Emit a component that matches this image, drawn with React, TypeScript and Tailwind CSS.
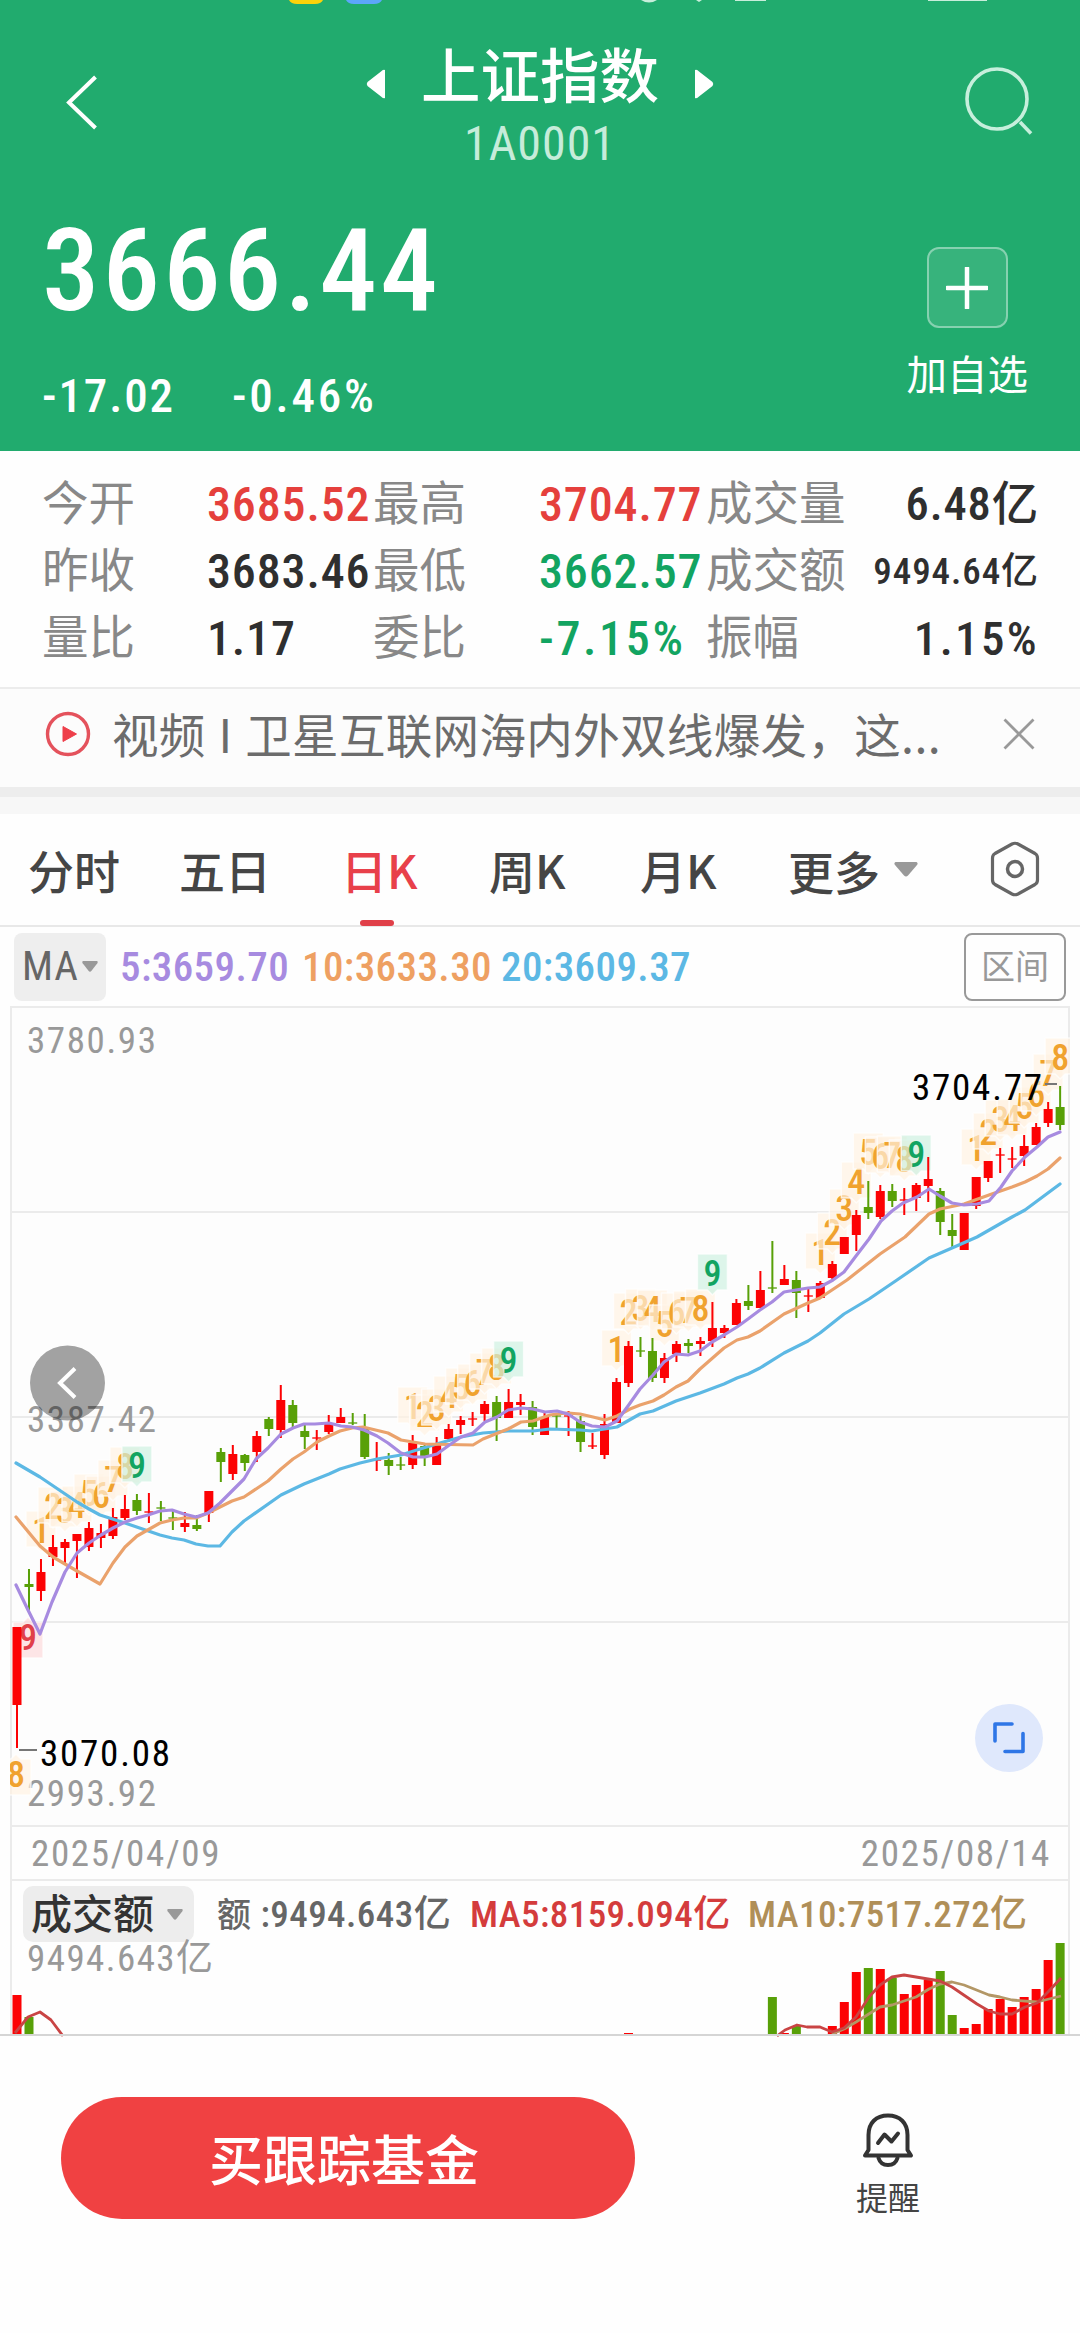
import { Fragment } from 'react';

// [body top, body bottom, high, low, up]
type Candle = [number, number, number, number, boolean];

const UP = '#fc0204';
const DOWN = '#58a008';

const candles: Candle[] = [
  [1627, 1705, 1627, 1748, true],
  [1584, 1587, 1569, 1610, false],
  [1572, 1591, 1559, 1601, true],
  [1547, 1557, 1535, 1566, true],
  [1542, 1548, 1539, 1563, true],
  [1534, 1541, 1534, 1578, true],
  [1528, 1547, 1522, 1551, true],
  [1533, 1538, 1524, 1548, true],
  [1517, 1536, 1508, 1539, true],
  [1509, 1518, 1495, 1520, true],
  [1500, 1511, 1494, 1515, false],
  [1511, 1513, 1493, 1523, true],
  [1507, 1509, 1501, 1521, false],
  [1517, 1519, 1510, 1530, false],
  [1523, 1527, 1512, 1532, true],
  [1525, 1529, 1515, 1531, false],
  [1491, 1513, 1491, 1522, true],
  [1452, 1462, 1448, 1482, false],
  [1454, 1474, 1445, 1480, true],
  [1455, 1463, 1454, 1471, false],
  [1436, 1452, 1431, 1462, true],
  [1419, 1429, 1417, 1436, false],
  [1400, 1430, 1385, 1438, true],
  [1405, 1423, 1400, 1427, false],
  [1431, 1437, 1425, 1449, false],
  [1437, 1439, 1430, 1450, true],
  [1423, 1432, 1415, 1434, true],
  [1417, 1423, 1408, 1423, true],
  [1422, 1424, 1413, 1425, false],
  [1428, 1457, 1414, 1459, false],
  [1459, 1461, 1442, 1471, true],
  [1460, 1466, 1453, 1475, false],
  [1464, 1466, 1457, 1470, false],
  [1443, 1465, 1435, 1469, true],
  [1446, 1456, 1443, 1466, false],
  [1445, 1465, 1437, 1465, true],
  [1429, 1439, 1424, 1442, true],
  [1420, 1425, 1416, 1434, true],
  [1418, 1420, 1412, 1426, true],
  [1404, 1414, 1401, 1421, true],
  [1402, 1418, 1396, 1441, false],
  [1402, 1418, 1389, 1418, true],
  [1402, 1405, 1394, 1415, true],
  [1407, 1427, 1401, 1435, false],
  [1417, 1435, 1413, 1435, true],
  [1415, 1417, 1413, 1428, false],
  [1415, 1417, 1411, 1436, true],
  [1421, 1442, 1416, 1452, false],
  [1445, 1447, 1433, 1449, true],
  [1424, 1455, 1414, 1459, true],
  [1382, 1423, 1378, 1423, true],
  [1346, 1383, 1341, 1387, true],
  [1350, 1352, 1337, 1357, false],
  [1351, 1378, 1338, 1382, false],
  [1358, 1378, 1353, 1383, true],
  [1344, 1354, 1341, 1362, true],
  [1343, 1346, 1339, 1353, false],
  [1341, 1344, 1337, 1356, true],
  [1328, 1341, 1302, 1347, true],
  [1328, 1333, 1325, 1338, true],
  [1303, 1325, 1299, 1325, true],
  [1301, 1306, 1285, 1310, false],
  [1290, 1308, 1271, 1308, true],
  [1287, 1289, 1241, 1293, false],
  [1279, 1285, 1265, 1285, true],
  [1280, 1293, 1271, 1318, false],
  [1295, 1297, 1287, 1312, true],
  [1283, 1298, 1281, 1298, true],
  [1264, 1278, 1261, 1280, true],
  [1237, 1254, 1237, 1254, true],
  [1215, 1235, 1210, 1251, true],
  [1207, 1213, 1181, 1219, false],
  [1191, 1217, 1185, 1219, true],
  [1191, 1201, 1184, 1207, false],
  [1199, 1201, 1188, 1215, true],
  [1185, 1198, 1183, 1211, true],
  [1179, 1186, 1157, 1202, true],
  [1191, 1222, 1188, 1235, false],
  [1230, 1236, 1214, 1248, false],
  [1213, 1250, 1213, 1250, true],
  [1177, 1206, 1177, 1209, true],
  [1161, 1178, 1161, 1182, true],
  [1154, 1156, 1148, 1173, true],
  [1158, 1160, 1147, 1168, true],
  [1146, 1156, 1135, 1166, true],
  [1127, 1145, 1123, 1145, true],
  [1109, 1123, 1102, 1127, true],
  [1107, 1125, 1086, 1130, false],
];

const ma5 =
  '16,1585 28,1610 40,1634 52,1602 65,1572 77,1553 89,1543 101,1535 113,1528 125,1522 137,1518 148,1515 160,1511 172,1510 184,1514 196,1517 208,1513 220,1503 232,1491 244,1479 256,1459 268,1448 281,1434 293,1428 304,1424 315,1424 329,1423 341,1426 352,1427 364,1430 377,1436 388,1443 401,1453 413,1457 425,1457 437,1454 448,1446 461,1437 473,1433 485,1422 497,1417 508,1410 521,1408 533,1409 545,1412 557,1411 568,1414 580,1422 592,1426 605,1427 617,1421 628,1406 640,1389 653,1375 664,1362 676,1354 688,1355 700,1351 712,1342 724,1335 737,1327 748,1319 760,1310 772,1302 784,1292 796,1290 808,1288 820,1287 833,1280 844,1272 856,1256 869,1239 881,1221 892,1211 903,1203 917,1197 929,1189 940,1196 952,1203 964,1205 977,1204 989,1201 1001,1187 1012,1171 1025,1157 1037,1147 1048,1137 1060,1132';
const ma10 =
  '16,1517 40,1546 53,1557 77,1571 100,1584 113,1563 125,1547 137,1536 160,1523 172,1520 184,1518 196,1518 208,1513 232,1501 244,1497 268,1481 281,1469 293,1459 304,1452 317,1442 329,1436 340,1431 352,1428 363,1427 388,1433 401,1440 425,1444 473,1445 483,1439 508,1429 521,1422 533,1421 550,1415 557,1414 568,1413 580,1414 593,1417 605,1420 617,1416 630,1409 640,1405 653,1401 664,1395 676,1387 688,1381 700,1369 724,1348 737,1340 748,1337 760,1331 784,1314 808,1303 820,1298 847,1280 880,1254 905,1237 929,1214 940,1209 964,1204 989,1195 1012,1187 1025,1182 1037,1176 1048,1169 1060,1158';
const ma20 =
  '16,1463 40,1477 77,1502 89,1509 100,1515 125,1523 160,1535 172,1538 184,1540 196,1544 208,1546 220,1546 232,1532 244,1521 281,1495 304,1484 329,1474 340,1469 360,1463 377,1459 401,1455 420,1449 440,1443 461,1437 483,1433 508,1431 533,1431 550,1429 580,1430 592,1431 617,1427 640,1414 653,1411 676,1401 700,1393 724,1384 737,1378 748,1374 760,1368 784,1353 808,1341 820,1333 844,1314 869,1299 897,1280 929,1258 952,1248 977,1237 1012,1217 1025,1210 1060,1184';

// first candle of each nine-turn run and how many counts it reaches
const runs = [
  { start: 2, count: 9 },
  { start: 33, count: 9 },
  { start: 50, count: 9 },
  { start: 67, count: 9 },
  { start: 80, count: 8 },
];

// [candle index, bar top, up]
const volumes: [number, number, boolean][] = [
  [0, 1995, true], [1, 2017, false], [51, 2033, true], [63, 1997, false], [64, 2033, true],
  [65, 2026, false], [68, 2026, true], [69, 2002, true], [70, 1972, true], [71, 1968, false],
  [72, 1969, true], [73, 1978, false], [74, 1994, true], [75, 1985, true], [76, 1980, true],
  [77, 1971, false], [78, 2015, false], [79, 2028, true], [80, 2024, true], [81, 2009, true],
  [82, 1999, true], [83, 2007, true], [84, 1997, true], [85, 1989, true], [86, 1960, true],
  [87, 1943, false],
];

const volMa5 = [
  '15,2033 28,2017 40,2012 51,2020 63,2036',
  '777,2036 785,2030 797,2025 807,2027 820,2027 832,2032 844,2028 856,2017 869,1997 880,1985 892,1977 904,1975 940,1981 952,1987 977,2004 989,2011 1000,2014 1012,2014 1025,2007 1037,2003 1048,1992 1061,1978',
];
const volMa10 =
  '832,2034 844,2029 856,2022 880,2007 892,2005 916,1997 929,1989 940,1984 952,1982 964,1985 989,1995 1000,1997 1012,2000 1037,2002 1061,1996';

const cx = (i: number) => 17 + i * 11.99;

const stats = [
  ['今开', '3685.52', 'text-[#e5403c]', '最高', '3704.77', 'text-[#e5403c]', '成交量', '6.48亿'],
  ['昨收', '3683.46', 'text-[#2f2f2f]', '最低', '3662.57', 'text-[#12a461]', '成交额', '9494.64亿'],
  ['量比', '1.17', 'text-[#2f2f2f]', '委比', '-7.15%', 'text-[#12a461]', '振幅', '1.15%'],
];

const tabs = ['分时', '五日', '日K', '周K', '月K'];

function Label({ x, y, w, fill = '#999', weight = 400, children }: {
  x: number; y: number; w: number; fill?: string; weight?: number; children: string;
}) {
  return (
    <text x={x} y={y} fontSize={37} fill={fill} fontWeight={weight} textLength={w} lengthAdjust="spacing">
      {children}
    </text>
  );
}

function Badge({ x, tip, n, below }: { x: number; tip: number; n: number; below?: boolean }) {
  const tone =
    n === 9 ? (below ? ['#fcd8da', '#e0404a'] : ['#cdf0e0', '#12a461']) : ['#fff1e2', '#f0a22e'];
  const s = below ? -1 : 1;
  const d = `M${x - 15} ${tip - 41 * s}H${x + 15}V${tip - 5 * s}H${x + 5}L${x} ${tip}L${x - 5} ${tip - 5 * s}H${x - 15}Z`;
  return (
    <g>
      <path d={d} fill={tone[0]} fillOpacity={0.68} stroke="#fff" strokeOpacity={0.7} strokeWidth={1.5} strokeLinejoin="round" />
      <text x={x} y={below ? tip + 33 : tip - 9} fontSize={36} fontWeight={500} fill={tone[1]} textAnchor="middle">{n}</text>
    </g>
  );
}

function KLineChart() {
  return (
    <svg className="block h-[821px] w-full" viewBox="0 1006 1080 821">
      <defs>
        <clipPath id="plot"><rect x="10" y="1006" width="1060" height="821" /></clipPath>
      </defs>
      <rect x="11" y="1007" width="1058" height="820" fill="#fdfdfd" />
      <g stroke="#ebebeb" strokeWidth="2">
        <path d="M10 1007H1070M10 1212H1070M10 1417H1070M10 1622H1070M10 1826H1070" />
        <path d="M11 1006V1827M1069 1006V1827" />
      </g>
      <Label x={27} y={1053} w={129}>3780.93</Label>
      <Label x={27} y={1432} w={129}>3387.42</Label>
      <Label x={27} y={1806} w={129}>2993.92</Label>
      <g clipPath="url(#plot)">
        <Badge x={16} tip={1754} n={8} below />
        <Badge x={28} tip={1617} n={9} below />
        {runs.map(r => (
          <Fragment key={r.start}>
            {Array.from({ length: r.count }, (_, k) => (
              <Badge key={k} x={cx(r.start + k)} tip={candles[r.start + k][2] - 7} n={k + 1} />
            ))}
          </Fragment>
        ))}
        {candles.map(([top, bottom, high, low, up], i) => (
          <g key={i} fill={up ? UP : DOWN}>
            <rect x={cx(i) - 1} y={high} width={2} height={low - high} />
            <rect x={cx(i) - 4.5} y={top} width={9} height={bottom - top} opacity={bottom - top < 3 ? 0.65 : 1} />
          </g>
        ))}
      </g>
      <g fill="none" strokeWidth="3.2" strokeLinejoin="round" strokeLinecap="round">
        <polyline points={ma20} stroke="#5cb8e4" />
        <polyline points={ma10} stroke="#eaa26c" />
        <polyline points={ma5} stroke="#a78be0" />
      </g>
      <path d="M19 1750H37M1045 1084H1057" stroke="#777" strokeWidth="2" />
      <Label x={40} y={1766} w={130} fill="#000">3070.08</Label>
      <Label x={912} y={1100} w={130} fill="#000">3704.77</Label>
      <circle cx="67.5" cy="1383" r="37.5" fill="#000" fillOpacity="0.36" />
      <path d="M75 1368.500L60 1383L75 1397.500" fill="none" stroke="#fff" strokeWidth="4" />
      <circle cx="1009" cy="1738" r="34" fill="#dfe8fc" />
      <path d="M1012 1724H995V1741M1023 1733.500V1751.500H1005" fill="none" stroke="#2f76e6" strokeWidth="3.6" strokeLinecap="round" strokeLinejoin="round" />
    </svg>
  );
}

function VolumeChart() {
  return (
    <svg className="block h-[93px] w-full overflow-visible" viewBox="0 1943 1080 93">
      <path d="M11 1943V2036M1069 1943V2036" stroke="#ebebeb" strokeWidth="2" />
      <Label x={27} y={1971} w={186}>9494.643亿</Label>
      {volumes.map(([i, top, up]) => (
        <rect key={i} x={cx(i) - 4.5} y={top} width={9} height={2036 - top} fill={up ? UP : DOWN} />
      ))}
      <g fill="none" strokeWidth="2.8" strokeLinejoin="round">
        <polyline points={volMa10} stroke="#b39766" />
        {volMa5.map(p => <polyline key={p} points={p} stroke="#c94444" />)}
      </g>
      <path d="M0 2035H1080" stroke="#d5d5d5" strokeWidth="2" />
    </svg>
  );
}

function Caret({ className }: { className: string }) {
  return (
    <svg className={className} viewBox="0 0 24 15" preserveAspectRatio="none">
      <path d="M1.500 0H22.500Q24.500 1 23 3L14 13.500Q12 15.500 10 13.500L1 3Q-.5 1 1.500 0Z" fill="#999" />
    </svg>
  );
}

function Header() {
  return (
    <header className="relative h-[451px] bg-[#21ab6e] text-white">
      {/* bottom slice of the status bar */}
      <svg className="absolute left-0 top-0 h-1 w-full" viewBox="0 0 1080 4">
        <path d="M289 0H323Q321 4 315 4H297Q291 4 289 0Z" fill="#fcd20a" />
        <path d="M346 0H382Q380 4 374 4H354Q348 4 346 0Z" fill="#5ca6fa" />
        <path d="M641 0Q649 5 657 0ZM696 0L699 2L702 0ZM735 0H766V1H735ZM928 0H987V1H928Z" fill="#c8eedb" />
      </svg>
      <div className="flex h-[200px] justify-between">
        <svg className="ml-[60px] mt-[70px] h-16 w-11" viewBox="0 0 44 64">
          <path d="M35.500 7L9 32.500L35.500 58" fill="none" stroke="#fff" strokeWidth="4" />
        </svg>
        <div className="ml-[14px] mt-[40px] flex flex-col items-center">
          <div className="flex h-[72px] items-center">
            <svg className="mt-4 h-[30px] w-5" viewBox="0 0 20 30">
              <path d="M19 1V29Q17 30 15 27.500L1.500 17Q0 15 1.500 13L15 2.500Q17 0 19 1Z" fill="#fff" />
            </svg>
            <h1 className="mx-[35px] pt-[4px] text-[59.500px] font-medium leading-[72px]">上证指数</h1>
            <svg className="mt-4 h-[30px] w-5" viewBox="0 0 20 30">
              <path d="M1 1V29Q3 30 5 27.500L18.500 17Q20 15 18.500 13L5 2.500Q3 0 1 1Z" fill="#fff" />
            </svg>
          </div>
          <div className="text-[48px] leading-[63px] tracking-[0.020em] text-[#c6ecda]">1A0001</div>
        </div>
        <svg className="mr-[42px] mt-[64px] size-[76px]" viewBox="0 0 76 76">
          <circle cx="35" cy="35" r="30" fill="none" stroke="#c6efdc" strokeWidth="3.6" />
          <path d="M58 58L69 69.500" stroke="#c6efdc" strokeWidth="3.6" />
        </svg>
      </div>
      <div className="flex justify-between pl-[42px] pr-[52px]">
        <div className="pt-[5px]">
          <div className="text-[115px] font-medium leading-[132px] tracking-[0.027em]">3666.44</div>
          <div className="mt-[31px] flex gap-[57px] text-[47px] font-medium leading-[56px] tracking-[0.040em]">
            <span>-17.02</span>
            <span className="tracking-[0.060em]">-0.46%</span>
          </div>
        </div>
        <div className="flex flex-col items-center pt-[47px]">
          <div className="flex size-[81px] items-center justify-center rounded-xl border-2 border-white/40 bg-white/10">
            <svg className="size-[42px]" viewBox="0 0 42 42">
              <path d="M21 1V41M1 21H41" stroke="#fff" strokeWidth="4.500" strokeLinecap="round" />
            </svg>
          </div>
          <span className="mt-[18px] text-[40.500px] leading-[60px]">加自选</span>
        </div>
      </div>
    </header>
  );
}

export default function App() {
  return (
    <div className="h-[2333px] w-[1080px] overflow-hidden bg-[#fefefe] font-['Roboto_Condensed','Noto_Sans_CJK_SC',sans-serif]">
      <Header />

      <section className="h-[236px] pt-[20px]">
        {stats.map(([a, av, ac, b, bv, bc, c, cv]) => (
          <div key={a} className="grid h-[67px] grid-cols-[165px_166px_166px_167px_1fr] items-center whitespace-nowrap pl-[42px] pr-[41px] text-[46.500px] font-medium leading-[67px]">
            <span className="font-normal text-[#888]">{a}</span>
            <span className={`text-[48px] tracking-[0.018em] ${ac}`}>{av}</span>
            <span className="font-normal text-[#888]">{b}</span>
            <span className={`text-[48px] ${bv.endsWith('%') ? 'tracking-[0.055em]' : 'tracking-[0.018em]'} ${bc}`}>{bv}</span>
            <div className="flex items-center justify-between">
              <span className="font-normal text-[#888]">{c}</span>
              <span className={`text-[#2f2f2f] ${cv.length > 6 ? 'text-[37px] tracking-[0.025em]' : cv.endsWith('%') ? 'text-[47px] tracking-[0.050em]' : 'text-[46.500px] tracking-[0.018em]'}`}>{cv}</span>
            </div>
          </div>
        ))}
      </section>

      <section className="flex h-[100px] items-center border-t-2 border-[#ececec] bg-[#fcfcfc] pl-[45px] pr-[45px] font-['Noto_Sans_CJK_SC',sans-serif]">
        <svg className="mt-[-9px] size-[46px]" viewBox="0 0 46 46">
          <circle cx="23" cy="23" r="20.500" fill="none" stroke="#e4525c" strokeWidth="3.400" />
          <path d="M18 15.500L31.500 23L18 30.500Z" fill="#ee3f4a" stroke="#ee3f4a" strokeLinejoin="round" />
        </svg>
        <p className="ml-[21px] mt-[-11px] flex-1 whitespace-nowrap text-[46.500px] leading-[60px] tracking-[0.35px] text-[#6c6c6c] [word-spacing:2px]">
          视频 I 卫星互联网海内外双线爆发，这...
        </p>
        <svg className="mt-[-9px] size-8" viewBox="0 0 32 32">
          <path d="M1.500 1.500L30.500 30.500M30.500 1.500L1.500 30.500" stroke="#999" strokeWidth="2.800" />
        </svg>
      </section>
      <div className="h-[10px] bg-[#ededed]" />
      <div className="h-[17px] bg-[#f7f7f7]" />

      <nav className="grid h-[113px] grid-cols-[151px_162px_148px_151px_148px_202px_1fr] grid-rows-[111px] items-center border-b-2 border-[#e8e8e8] pl-[28px] font-['Noto_Sans_CJK_SC',sans-serif] text-[46px] font-medium leading-[110px] text-[#454545]">
        {tabs.map(t => (
          <div key={t} className={t === '日K' ? 'relative h-[111px] text-[#e8404a]' : 'h-[111px]'}>
            {t}
            {t === '日K' && <i className="absolute bottom-[-1px] left-[19px] h-[6px] w-[34px] rounded-sm bg-[#e04049]" />}
          </div>
        ))}
        <div className="flex h-[111px] items-center">
          <span>更多</span>
          <Caret className="ml-[14px] h-[15px] w-6" />
        </div>
        <svg className="mt-[-1px] h-[56px] w-[50px]" viewBox="0 0 50 56">
          <path d="M22 3Q25 1.500 28 3L45 12.500Q47.500 14 47.500 17V39Q47.500 42 45 43.500L28 53Q25 54.500 22 53L5 43.500Q2.500 42 2.500 39V17Q2.500 14 5 12.500Z" fill="none" stroke="#666" strokeWidth="3.200" />
          <circle cx="25" cy="28" r="7.500" fill="none" stroke="#666" strokeWidth="3.500" />
        </svg>
      </nav>

      <div className="flex h-[79px] items-center pl-[14px] pr-[14px]">
        <div className="flex h-[68px] w-[92px] items-center rounded-lg bg-[#eee] pl-[8px] text-[41px] text-[#666]">
          <span className="w-[58px] tracking-[0.020em]">MA</span>
          <Caret className="ml-[2px] h-[11px] w-4" />
        </div>
        <div className="ml-[14px] grid flex-1 grid-cols-[182px_199px_1fr] pt-[2px] text-[41px] font-medium tracking-[0.010em]">
          <span className="text-[#a78be0]">5:3659.70</span>
          <span className="text-[#eea062]">10:3633.30</span>
          <span className="text-[#5cb8e4]">20:3609.37</span>
        </div>
        <div className="flex h-[68px] w-[102px] items-center justify-center rounded-lg border-2 border-[#999] pt-[2px] text-[34px] text-[#999]">
          区间
        </div>
      </div>

      <KLineChart />

      <div className="mx-[10px] flex h-[54px] items-center justify-between border-x-2 border-b-2 border-[#ebebeb] pl-[19px] pr-[17px] pt-[1px] text-[37px] tracking-[0.045em] text-[#999]">
        <span>2025/04/09</span>
        <span>2025/08/14</span>
      </div>
      <div className="mx-[10px] flex h-[62px] items-center whitespace-nowrap border-x-2 border-[#ebebeb] pl-[11px] text-[37px] tracking-[0.012em]">
        <div className="mt-[4px] flex h-[56px] w-[171px] items-center rounded-[10px] bg-[#ededed] pl-[8px] pt-[4px] text-[41px] font-medium tracking-normal text-[#333]">
          成交额
          <Caret className="mb-[3px] ml-[13px] h-[11px] w-4" />
        </div>
        <span className="ml-[23px] w-[253px] pt-[6px] font-medium text-[#666]"><span className="text-[34px]">额</span> :9494.643亿</span>
        <span className="w-[278px] pt-[6px] font-medium text-[#d43c3c]">MA5:8159.094亿</span>
        <span className="pt-[6px] font-medium text-[#b08f58]">MA10:7517.272亿</span>
      </div>
      <VolumeChart />

      <footer className="flex items-start pl-[61px] pt-[61px]">
        <button className="h-[122px] w-[574px] rounded-full bg-[#f04142] pr-[8px] pt-[5px] text-[54px] font-medium leading-[122px] text-white">
          买跟踪基金
        </button>
        <div className="ml-[221px] flex flex-col items-center pt-[15px]">
          <svg className="h-[56px] w-[54px]" viewBox="0 0 54 56" fill="none" stroke="#333" strokeWidth="4" strokeLinejoin="round" strokeLinecap="round">
            <path d="M7.500 38V23C7.500 11 15 3.500 27 3.500S46.500 11 46.500 23V38L50 43.500H4L7.500 38Z" />
            <path d="M17.500 46C19 51 22 53 27 53S35 51 36.500 46" />
            <path d="M17 31L23.500 22.500L30.500 29.500L37 21.500" />
          </svg>
          <span className="mt-[7px] text-[32px] leading-[48px] text-[#444]">提醒</span>
        </div>
      </footer>
    </div>
  );
}
